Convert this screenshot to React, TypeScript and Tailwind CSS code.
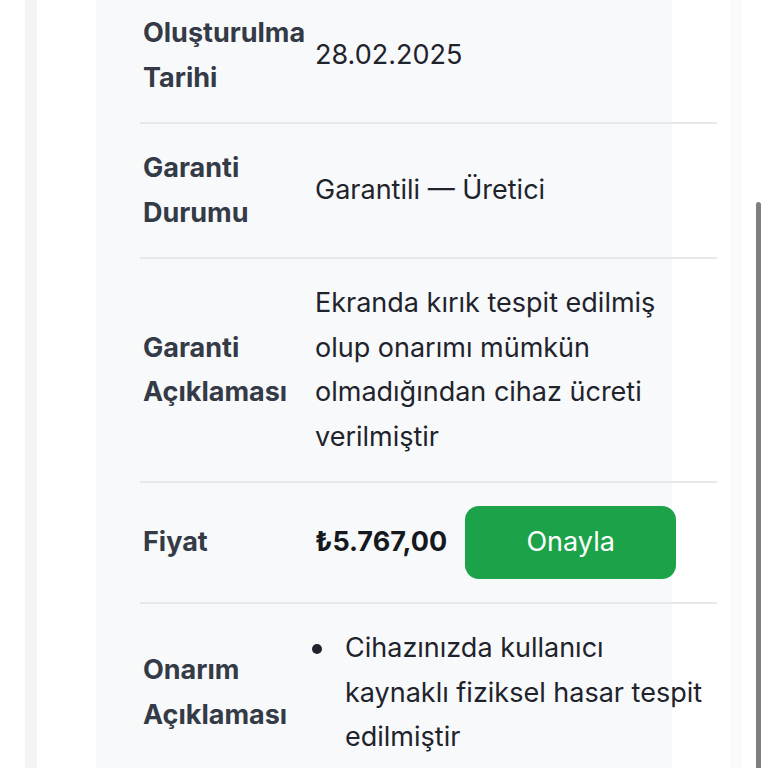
import React from 'react';

type Row = {label: string[]; value: React.ReactNode};

const font = {fontFamily: 'Inter, "Noto Sans", sans-serif'};

function Label({lines}: {lines: string[]}) {
  return (
    <div className="pl-[3px] font-bold text-[#343a46]">
      {lines.map((l) => (
        <div key={l}>{l}</div>
      ))}
    </div>
  );
}

function DetailRow({row, last}: {row: Row; last?: boolean}) {
  return (
    <div
      className={
        last
          ? 'grid grid-cols-[175px_1fr] items-center py-[22px]'
          : 'grid grid-cols-[175px_1fr] items-center py-[22px] border-b-2 border-[#e7e8eb]'
      }
    >
      <Label lines={row.label} />
      <div className="pr-2 text-[#1f232b]">{row.value}</div>
    </div>
  );
}

export default function App() {
  const rows: Row[] = [
    {label: ['Oluşturulma', 'Tarihi'], value: '28.02.2025'},
    {label: ['Garanti', 'Durumu'], value: 'Garantili — Üretici'},
    {
      label: ['Garanti', 'Açıklaması'],
      value: (
        <div className="pr-3">
          Ekranda kırık tespit edilmiş olup onarımı mümkün olmadığından cihaz ücreti verilmiştir
        </div>
      ),
    },
    {
      label: ['Fiyat'],
      value: (
        <div className="flex items-center gap-[18px] py-px">
          <span className="font-bold text-[#15181d]">₺5.767,00</span>
          <button className="w-[211px] h-[73px] rounded-[14px] bg-[#1ca34a] text-white">Onayla</button>
        </div>
      ),
    },
  ];

  return (
    <div className="relative h-[768px] overflow-hidden bg-white text-[27px] leading-[44.5px]" style={font}>
      <div className="ml-[25px] mr-[26px] px-3 bg-[linear-gradient(to_right,#f4f4f5,#fafafa)]">
        <div className="bg-white pl-[59px]">
          <div className="bg-[linear-gradient(to_right,#f8f9fb_576px,#ffffff_576px)] pl-[44px] pr-[13px]">
            <div className="-mt-[11px]">
              {rows.map((r, i) => (
                <DetailRow key={i} row={r} />
              ))}
              <DetailRow
                last
                row={{
                  label: ['Onarım', 'Açıklaması'],
                  value: (
                    <div className="flex -ml-[3px]">
                      <span className="block shrink-0 mt-[18px] mr-[23px] w-[10px] h-[10px] rounded-full bg-[#1f232b]" />
                      <div>Cihazınızda kullanıcı kaynaklı fiziksel hasar tespit edilmiştir</div>
                    </div>
                  ),
                }}
              />
            </div>
          </div>
        </div>
      </div>
      <div className="absolute right-[7px] top-[202px] w-[5px] h-[580px] rounded-full bg-[#7f7f7f]" />
    </div>
  );
}
